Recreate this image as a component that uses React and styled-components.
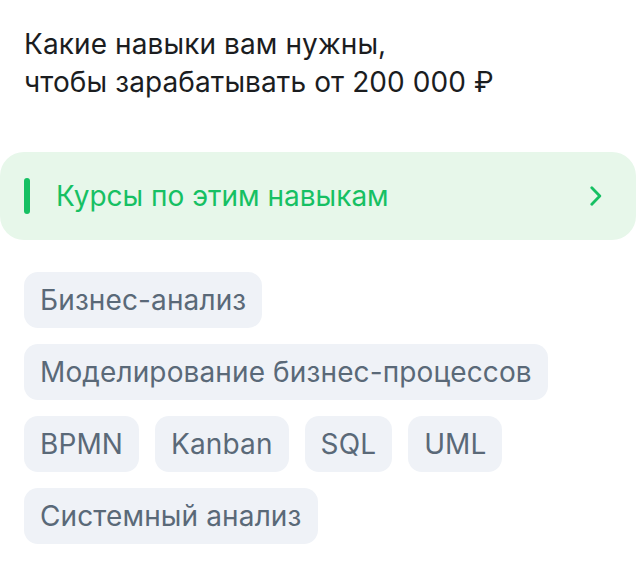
import React from "react";
import styled, { createGlobalStyle } from "styled-components";

const skills = [
	["Бизнес-анализ"],
	["Моделирование бизнес-процессов"],
	["BPMN", "Kanban", "SQL", "UML"],
	["Системный анализ"],
];

export default function App() {
	return (
		<>
			<GlobalStyle />
			<Page>
				<Title>
					Какие навыки вам нужны,
					<br />
					чтобы зарабатывать от 200 000 ₽
				</Title>

				<CoursesLink>
					<Marker />
					<LinkText>Курсы по этим навыкам</LinkText>
					<Chevron viewBox="0 0 12 20">
						<path d="M1.8 1.8l8 8.2-8 8.2" />
					</Chevron>
				</CoursesLink>

				<Tags>
					{skills.map((row, i) => (
						<TagRow key={i}>
							{row.map((s) => (
								<Tag key={s}>{s}</Tag>
							))}
						</TagRow>
					))}
				</Tags>
			</Page>
		</>
	);
}

const GlobalStyle = createGlobalStyle`
	body {
		margin: 0;
		background: #fff;
		font-family: Inter, "Noto Sans", sans-serif;
	}
`;

const Page = styled.div`
	width: 636px;
	padding-top: 25px;
`;

const Title = styled.h2`
	margin: 0 0 51px;
	padding: 0 24px;
	font-size: 28px;
	line-height: 38px;
	font-weight: 400;
	letter-spacing: 0.1px;
	color: #1b1d1f;
`;

const CoursesLink = styled.div`
	display: flex;
	align-items: center;
	height: 88px;
	padding: 0 24px;
	background: #e7f7ea;
	border-radius: 24px;
	cursor: pointer;
`;

const Marker = styled.span`
	width: 6px;
	height: 36px;
	border-radius: 3px;
	background: #16c063;
`;

const LinkText = styled.span`
	flex: 1;
	margin-left: 26px;
	font-size: 28px;
	color: #16c063;
`;

const Chevron = styled.svg`
	width: 12px;
	height: 20px;
	margin-right: 10px;
	fill: none;
	stroke: #16c063;
	stroke-width: 2.8;
	stroke-linecap: round;
	stroke-linejoin: round;
`;

const Tags = styled.div`
	display: flex;
	flex-direction: column;
	gap: 16px;
	padding: 32px 24px 0;
`;

const TagRow = styled.div`
	display: flex;
	gap: 16px;
`;

const Tag = styled.span`
	padding: 10px 16px;
	font-size: 28px;
	line-height: 36px;
	letter-spacing: 0.12px;
	color: #5a6978;
	background: #eff2f7;
	border-radius: 14px;
`;
